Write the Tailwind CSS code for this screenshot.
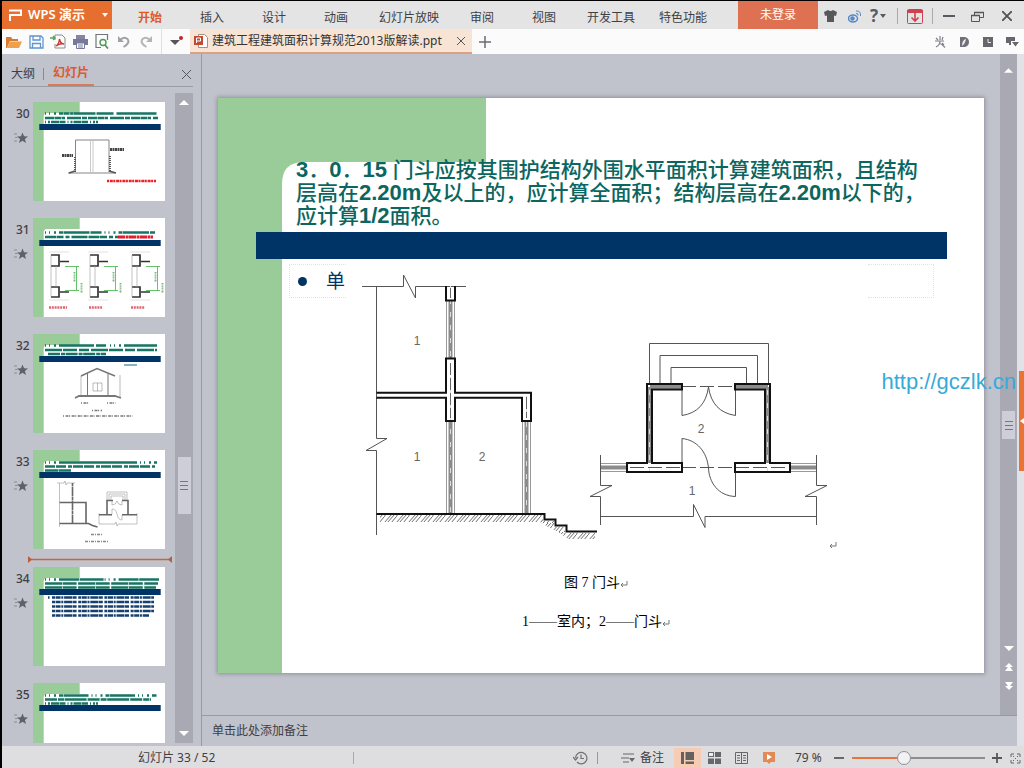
<!DOCTYPE html>
<html lang="zh-CN">
<head>
<meta charset="utf-8">
<title>WPS 演示</title>
<script src="https://cdn.jsdelivr.net/npm/@tailwindcss/browser@4"></script>
</head>
<body class="font-['Noto_Sans','Noto_Sans_CJK_SC',sans-serif] text-xs text-[#404044] bg-[#c0c2cc]">
<svg class="absolute w-0 h-0" aria-hidden="true">
  <defs>
    <symbol id="star" viewBox="0 0 14 12"><path d="M8.500 0.500l1.500 3.800 4 .2-3.100 2.500 1.100 4-3.500-2.300L5 11l1.100-4L3 4.500l4-.2z" fill="#5f6068"/><path d="M0 2h3M1 5.500h2.500M0 9h3" stroke="#8a8b93" fill="none"/></symbol>
    <symbol id="thumb" viewBox="0 0 132 99"><path fill="#fff" d="M0 0h132v99H0z"/><path fill="#9c9" d="M0 0h46.700v11H14q-3.300 0-3.300 3.500V99H0z"/><path fill="#036" d="M6.300 22h121.400v6H6.300z"/></symbol>
    <symbol id="ret" viewBox="0 0 8 8"><path d="M7 1v4H1M3 3L1 5l2 2" fill="none" stroke="#777"/></symbol>
    <pattern id="hatch" width="12" height="9" patternUnits="userSpaceOnUse" y="514"><path d="M0 9L8 0M3 9L11 0M7 9l5-6M0 3L2 0" stroke="#444" stroke-width=".8" fill="none"/></pattern>
  </defs>
</svg>
<div class="flex flex-col h-screen border-t border-l-2 border-black overflow-hidden">
  <header class="flex shrink-0 h-7 bg-[#e4e4e5] items-stretch">
    <button class="flex items-center w-[110px] pl-1.5 bg-[#e66f30] text-white text-xs font-semibold">
      <svg class="w-[14px] h-3 mr-1.5" viewBox="0 0 14 12" fill="none" stroke="#fff" stroke-width="2"><path d="M1 1.500h12v4.500H2V12"/></svg>
      <span class="flex-1 text-left text-[13px] whitespace-nowrap">WPS 演示</span>
      <svg class="w-[6px] h-[4px] mr-1" viewBox="0 0 6 4"><path d="M0 0h6L3 4z" fill="#fff"/></svg>
    </button>
    <nav class="flex ml-[7px] [&>button]:w-[62px] [&>button]:pt-1.5">
      <button class="text-[#dd5a22] font-bold">开始</button><button>插入</button><button>设计</button><button>动画</button>
      <button class="w-[84px]!">幻灯片放映</button><button>审阅</button><button>视图</button>
      <button class="w-[72px]!">开发工具</button><button class="w-[72px]!">特色功能</button>
    </nav>
    <div class="flex-1"></div>
    <button class="w-20 bg-[#de7152] text-white">未登录</button>
    <div class="flex items-center w-[206px] pt-0.5">
      <button aria-label="皮肤" class="w-6 grid place-items-center"><svg width="13" height="12" viewBox="0 0 13 12" fill="#57585c"><path d="M0 2l4-2q2.500 2 5 0l4 2-1 4-2-.5V12H3V5.500L1 6z"/></svg></button>
      <button aria-label="微博" class="w-6 grid place-items-center"><svg width="13" height="13" viewBox="0 0 13 13" fill="none" stroke="#5488c8"><ellipse cx="5" cy="8.500" rx="4.500" ry="3.500" stroke-width="1.500"/><circle cx="4.500" cy="8.500" r="1.800" fill="#5488c8"/><path d="M8 3.500q2.500-.5 2 2M8 1q5-.5 4.500 5"/></svg></button>
      <button aria-label="帮助" class="flex items-center w-[31px] pl-1 text-[17px] leading-5 font-bold text-[#5a5b60]">?<svg class="ml-0.5" width="6" height="4" viewBox="0 0 6 4"><path d="M0 0h6L3 4z" fill="#5a5b60"/></svg></button>
      <span class="w-px h-4 bg-[#aaa]"></span>
      <button aria-label="下载" class="w-[34px] grid place-items-center"><svg width="16" height="15" viewBox="0 0 16 15" fill="none" stroke="#cd4150"><rect x=".5" y=".5" width="15" height="14" rx="1"/><path d="M0 2.500h16" stroke-width="3"/><path d="M8 4v8M4.500 8.500L8 12l3.500-3.500" stroke-width="1.600"/></svg></button>
      <span class="w-px h-4 bg-[#aaa]"></span>
      <button aria-label="最小化" class="w-8 grid place-items-center"><span class="w-3 h-0.5 bg-[#5a5b60]"></span></button>
      <button aria-label="还原" class="w-6 grid place-items-center"><svg width="13" height="11" viewBox="0 0 13 11" fill="none" stroke="#55565a"><path d="M.5 4.500h8v6h-8zM3.500 4V1.500h9v5H9"/><path d="M3 1.500h10M0 4.500h9" stroke-width="1.500"/></svg></button>
      <button aria-label="关闭" class="flex-1 grid place-items-center"><svg width="10" height="10" viewBox="0 0 10 10" stroke="#505155" stroke-width="1.800"><path d="M0 0l10 10M10 0L0 10"/></svg></button>
    </div>
  </header>

  <div class="flex shrink-0 h-[25px] bg-[#fbfbfb] items-stretch">
    <div class="flex ml-px [&>button]:w-[22px] [&>button]:grid [&>button]:place-items-center">
      <button aria-label="打开"><svg width="16" height="12" viewBox="0 0 16 12"><path d="M0 12V1h5l1.500 2H12v2H4L1 12z" fill="#d77b31"/><path d="M4 5.500h12L13 12H1z" fill="#f0a04d"/></svg></button>
      <button aria-label="保存"><svg width="15" height="14" viewBox="0 0 15 14" fill="none" stroke="#5e94d0" stroke-width="1.300"><path d="M1 1h11l2 2v10H1zM4 1v4h7V1M3.500 13V8.500h8V13"/></svg></button>
      <button aria-label="输出为PDF"><svg width="16" height="15" viewBox="0 0 16 15" fill="none"><path d="M5 6V1h7l3 3v10H5V10" stroke="#8a8b90"/><path d="M6 12q3-2 3.500-7 1 5 4.500 5-4-1-8 2z" stroke="#c43c34" stroke-width="1.400"/><path d="M0 4h5M3 2l2 2-2 2" stroke="#59a05c" stroke-width="1.300"/></svg></button>
      <button aria-label="打印"><svg width="15" height="14" viewBox="0 0 15 14"><path d="M3 0h9v4H3z" fill="#84869f"/><path d="M0 4h15v6H0z" fill="#75789c"/><path d="M3.500 8h8v5.500h-8z" fill="#fff" stroke="#75789c"/><path d="M5 10h5M5 12h5" stroke="#75789c"/></svg></button>
      <button aria-label="打印预览"><svg width="14" height="15" viewBox="0 0 14 15" fill="none"><path d="M12.500 6V.5H1v13h5" stroke="#73757b" stroke-width="1.200"/><circle cx="8" cy="8.500" r="3" stroke="#4e9a58" stroke-width="1.400"/><path d="M10 11l3 3.500" stroke="#4e9a58" stroke-width="1.800"/></svg></button>
      <button aria-label="撤销"><svg width="12" height="13" viewBox="0 0 12 13" fill="none" stroke="#a0a1a6" stroke-width="2"><path d="M2 5q4-4 7.500-1 3 4-4 8"/><path d="M0 1v6h6z" fill="#a0a1a6" stroke="none"/></svg></button>
      <button aria-label="恢复"><svg width="12" height="13" viewBox="0 0 12 13" fill="none" stroke="#b3b4b8" stroke-width="2"><path d="M10 5q-4-4-7.500-1-3 4 4 8"/><path d="M12 1v6H6z" fill="#b3b4b8" stroke="none"/></svg></button>
    </div>
    <span class="w-px ml-[4px] bg-[#e0e0e0]"></span>
    <button aria-label="更多" class="w-7 grid place-items-center"><svg width="13" height="11" viewBox="0 0 13 11"><path d="M0 4h10L5 9z" fill="#55565c"/><circle cx="11" cy="2" r="2" fill="#c4242a"/></svg></button>
    <div class="flex items-center w-[282px] pl-1 bg-[#f7e4d5] border-b-2 border-[#dda084] text-xs">
      <svg width="14" height="14" viewBox="0 0 14 14" fill="none"><path d="M4.500.5h6l3 3v10h-9z" stroke="#9e9187" fill="#fff"/><path d="M0 2h9v9H0z" fill="#c24a32"/><path d="M2.500 9V4h4v3h-4" stroke="#fff"/></svg>
      <span class="ml-1 flex-1 whitespace-nowrap text-[#333]">建筑工程建筑面积计算规范2013版解读.ppt</span>
      <button aria-label="关闭文档" class="w-[22px] grid place-items-center"><svg width="8" height="8" viewBox="0 0 8 8" stroke="#555"><path d="M0 0l8 8M8 0L0 8"/></svg></button>
    </div>
    <button aria-label="新建" class="w-[26px] grid place-items-center"><svg width="12" height="12" viewBox="0 0 12 12" stroke="#6b6c70" stroke-width="1.500"><path d="M0 6h12M6 0v12"/></svg></button>
    <div class="flex-1"></div>
    <div class="flex [&>button]:w-6 [&>button]:grid [&>button]:place-items-center">
      <button aria-label="皮肤中心"><svg width="11" height="12" viewBox="0 0 11 12" fill="none" stroke="#808187" stroke-width="1.200"><path d="M5 0v4M1 2l2 2M8 1L7 4M0 5h9M5 5q0 4-4 6M4 7q3 1 6 4.500M7 7l2 2"/></svg></button>
      <button aria-label="稻壳"><svg width="9" height="10" viewBox="0 0 9 10"><path d="M0 0h5q4 1 4 5t-4 5H0z" fill="#707178"/><path d="M2 9q0-6 4-7-1 5-4 7" fill="#eee"/></svg></button>
      <button aria-label="历史"><svg width="10" height="10" viewBox="0 0 10 10"><path d="M0 0h10v10H0z" fill="#66676d"/><path d="M5 2v3.500h3" stroke="#eee" fill="none"/></svg></button>
      <button aria-label="选项"><svg width="13" height="10" viewBox="0 0 13 10" fill="#66676d"><path d="M0 0h9v4H5v4H3v-2H0zM6 5h7L9.500 9.500z"/></svg></button>
    </div>
  </div>

  <main class="flex flex-1 min-h-0">
    <aside class="flex flex-col w-[200px] shrink-0 border-r border-[#999ba4]">
      <div class="flex items-end ml-1.5 mr-2 h-[33px] border-b border-[#9a9ca4] shrink-0">
        <button class="h-6 w-[30px]">大纲</button>
        <span class="w-px h-3 ml-[5px] mr-1 mb-1.5 bg-[#888a93]"></span>
        <button class="h-6 w-[46px] font-bold text-[#dd5a2c] border-b-2 border-[#dc7a58]">幻灯片</button>
        <span class="flex-1"></span>
        <button aria-label="关闭窗格" class="h-6 w-[9px] mr-0.5 grid place-items-center"><svg width="9" height="9" viewBox="0 0 9 9" stroke="#55565e"><path d="M0 0l9 9M9 0L0 9"/></svg></button>
      </div>
      <div class="flex flex-1 min-h-0 mt-1.5 mb-[3px]">
        <ol class="flex-1 overflow-hidden pt-[9px] [&>li]:flex [&>li]:mb-[17px] [&_.art]:w-[132px] [&_.art]:h-[99px]">
          <li><div class="w-[31px] pl-[14px] pt-1 font-medium leading-4 shrink-0">30<svg class="-ml-0.5 mt-2.5 w-[14px] h-3"><use href="#star"/></svg></div>
            <svg class="art" viewBox="0 0 132 99" fill="none"><use href="#thumb"/>
              <g stroke="#177564" stroke-width="2.600"><path d="M12 11.500h112" stroke-dasharray="1 3 1 4 2 3 4 .5 6 .6 3 .4 22 1 17 3 40 1"/><path d="M12 16h113" stroke-dasharray="9 .5 7 .5 3 2 14 1 5 1"/><path d="M12 20h53" stroke-dasharray="1 2 2 1 8 .5 6 2"/></g>
              <g stroke="#666" stroke-width=".8"><path d="M42.500 38H76M42.500 38v32M76 38v32M35 71h47"/><path d="M57.500 38v32M60 38v32" stroke="#bbb"/></g><path d="M42 55v15M77 54v16" stroke="#555" stroke-width="2" stroke-dasharray="1 1"/><path d="M29 53.500h11M77 47.500h14" stroke="#444" stroke-width="3" stroke-dasharray="2 .5"/><path d="M36 71l6-2M76 69l7 2" stroke="#555" stroke-width="1.500"/>
              <path d="M74 79h49" stroke="#e22" stroke-width="2.600" stroke-dasharray="2 .8 3 .5"/></svg></li>
          <li><div class="w-[31px] pl-[14px] pt-1 font-medium leading-4 shrink-0">31<svg class="-ml-0.5 mt-2.5 w-[14px] h-3"><use href="#star"/></svg></div>
            <svg class="art" viewBox="0 0 132 99" fill="none"><use href="#thumb"/>
              <g stroke="#177564" stroke-width="2.600"><path d="M12 14.500h110" stroke-dasharray="1 3 1 4 2 3 4 .5 26 1 11 3"/><path d="M12 19h73" stroke-dasharray="11 .5 7 2 4 2 16 1"/></g><path d="M85 19h35" stroke="#e21f2c" stroke-width="3" stroke-dasharray="7 .6 3 .4"/>
              <g id="col"><path d="M18 37h8v11h-8M18 69h8v10h-8" stroke="#333" stroke-width="1.700"/><path d="M18 37v11M18 69v10M18 48v21M23 48v21" stroke="#999" stroke-width=".6"/><path d="M27 43.500h9M27 74h9" stroke="#333" stroke-width="1.500"/><path d="M32 48.500h14M43.500 48v25M32 72.500h14" stroke="#53bd58" stroke-width=".9"/><path d="M41.500 54v10M48.500 65v10" stroke="#72b777" stroke-width="1.800" stroke-dasharray="1 .6"/><path d="M16 34h20M16 82h20" stroke="#ccc" stroke-width=".6"/></g><use href="#col" x="39"/><use href="#col" x="81"/>
              <path d="M16 89.500h18M56 89.500h13M98 89.500h14" stroke="#dd6670" stroke-width="2.400" stroke-dasharray="2 .8"/></svg></li>
          <li><div class="w-[31px] pl-[14px] pt-1 font-medium leading-4 shrink-0">32<svg class="-ml-0.5 mt-2.5 w-[14px] h-3"><use href="#star"/></svg></div>
            <svg class="art" viewBox="0 0 132 99" fill="none"><use href="#thumb"/>
              <g stroke="#177564" stroke-width="2.600"><path d="M12 11.500h112" stroke-dasharray="1 3 1 4 2 3 35 2 10 4"/><path d="M12 16h112" stroke-dasharray="17 1 14 2 10 2"/><path d="M15 20h58" stroke-dasharray="12 1 4 .6"/></g><path d="M91 31h13" stroke="#2f83a0" stroke-width="1.200"/>
              <g stroke="#777"><path d="M48 42l16-7.500L82 42" stroke-width="1.500"/><path d="M54.500 39v23M75 39v23"/><path d="M42 64l4-2h36l6 2" stroke-width="1.800"/><path d="M60 49h9v8h-9zM64.500 49v8M48 42v20M87 41v22" stroke-width=".5"/></g>
              <path d="M48 69h8M74 69h9M59 76.500h10M30 82h70" stroke="#777" stroke-width="1.300" stroke-dasharray="1 1.500 3 .6"/></svg></li>
          <li><div class="w-[31px] pl-[14px] pt-1 font-medium leading-4 shrink-0">33<svg class="-ml-0.5 mt-2.5 w-[14px] h-3"><use href="#star"/></svg></div>
            <svg class="art" viewBox="0 0 132 99" fill="none"><use href="#thumb"/>
              <g stroke="#177564" stroke-width="2.600"><path d="M12 12.500h112" stroke-dasharray="1 3 1 4 2 3 78 3"/><path d="M12 16.500h110" stroke-dasharray="10 1 10 2 4 1"/><path d="M12 20.500h26" stroke-dasharray="13 .5"/></g>
              <g stroke="#999" stroke-width=".6"><path d="M24 33h7l1-2 1 4 1-2h8M26.500 33v44M74 50v-8h20v8M76 50v-6h16v6M78 50v-4h12v4M66 63v11h16l1-2 1 4 1-2h19V63M79 51v4q4 0 5-4 1 4 5 4v-4M79 64v-5q4 0 5 5 1 6 5 6v-5"/></g>
              <g stroke="#666" stroke-width="1.600"><path d="M39.500 33v40" stroke-dasharray="3 .5 10 .5"/><path d="M26.500 52.500h26.500v21M26.500 73.500h29l4 2 5 1.500M80 50.500h-6v14M89 50.500h6v14M66 64.700h13M89 64.700h15"/></g>
              <path d="M58 84.500h11M52 91.500h24" stroke="#888" stroke-width="1.500" stroke-dasharray="3 1 1 1"/></svg></li>
          <li class="mb-1! -mt-2.5 ml-[26px] items-center" aria-hidden="true"><svg class="w-[144px] h-[7px]" viewBox="0 0 144 7"><path d="M2 3.500h140" stroke="#c9673c" stroke-width="1.500"/><path d="M0 0l4 3.500L0 7zM144 0l-4 3.500 4 3.500z" fill="#b55f40"/></svg></li>
          <li><div class="w-[31px] pl-[14px] pt-1 font-medium leading-4 shrink-0">34<svg class="-ml-0.5 mt-2.5 w-[14px] h-3"><use href="#star"/></svg></div>
            <svg class="art" viewBox="0 0 132 99" fill="none"><use href="#thumb"/>
              <g stroke="#177564" stroke-width="2.600"><path d="M12 12.500h114" stroke-dasharray="1 3 1 4 2 3 20 .6 24 1"/><path d="M12 16.500h113M12 20.500h111" stroke-dasharray="17 .6 14 1.500"/></g>
              <g stroke="#173f70" stroke-width="2.400"><path d="M15 30.500h1.500M19 30.500h102M19 35h102M19 39.500h102M19 44h102M19 48.500h97" stroke-dasharray="3 .6 5 .7 2 .8 8 .5 4 1.600"/></g></svg></li>
          <li><div class="w-[31px] pl-[14px] pt-1 font-medium leading-4 shrink-0">35<svg class="-ml-0.5 mt-2.5 w-[14px] h-3"><use href="#star"/></svg></div>
            <svg class="art" viewBox="0 0 132 99" fill="none"><use href="#thumb"/>
              <g stroke="#177564" stroke-width="2.600"><path d="M12 12.500h112" stroke-dasharray="1 3 1 4 2 3 4 .5 25 3"/><path d="M12 16.500h106" stroke-dasharray="12 1 6 .6 22 1"/><path d="M12 20.500h53" stroke-dasharray="1 2 2 1 8 .5 6 2"/></g></svg></li>
        </ol>
        <div class="flex flex-col items-center w-[18px] mr-2 bg-[#a8a9b2] py-[7px]">
          <svg width="10" height="5" viewBox="0 0 10 5"><path d="M0 5h10L5 0z" fill="#fff"/></svg>
          <div class="flex-[352]"></div>
          <div class="flex flex-col justify-center items-center gap-[3px] w-[13px] h-[57px] bg-[#ceced8]"><i class="w-2 h-px bg-[#777]"></i><i class="w-2 h-px bg-[#777]"></i><i class="w-2 h-px bg-[#777]"></i></div>
          <div class="flex-[217]"></div>
          <svg width="10" height="5" viewBox="0 0 10 5"><path d="M0 0h10L5 5z" fill="#fff"/></svg>
        </div>
      </div>
    </aside>

    <section class="flex flex-col flex-1 min-w-0 bg-[#c0c2cc]">
      <div class="flex flex-1 min-h-0">
        <div class="flex-1 min-w-0 px-4 pt-11 overflow-hidden">
          <article class="relative w-full aspect-[766/575] bg-white shadow-[0_0_4px_1px_#8f9099] overflow-hidden">
            <svg class="absolute inset-0 w-full h-full" viewBox="0 0 766 575"><path d="M0 0h268v64H86q-22 0-22 22v489H0z" fill="#9c9"/></svg>
            <div class="relative pt-[60px]">
              <h1 class="ml-[78px] text-[21px] leading-[23px] text-[#0b6660] whitespace-nowrap font-medium font-['Liberation_Sans','Noto_Sans_CJK_SC',sans-serif] [&>b]:text-[22px]"><b>3</b>．<b>0</b>．<b>15</b> 门斗应按其围护结构外围水平面积计算建筑面积，且结构<br>层高在<b>2.20m</b>及以上的，应计算全面积；结构层高在<b>2.20m</b>以下的，<br>应计算<b>1/2</b>面积。</h1>
              <div class="h-[27px] mt-[5px] ml-[38px] mr-[37px] bg-[#036]"></div>
              <div class="flex items-start ml-[71px] mr-[50px] mt-[5px]">
                <p class="flex items-center h-[34px] w-[57px] pl-2 shrink-0 border border-r-0 border-dotted border-[#e2e2e6] text-[19px] leading-5 text-[#036]"><span class="w-[9px] h-[9px] rounded-full bg-[#036] mr-[19px] shrink-0"></span>单</p>
                <figure class="w-[522px] shrink-0 font-['Liberation_Serif','Noto_Sans_CJK_SC',serif] text-sm text-black">
                  <svg class="w-full h-[299px] block" viewBox="346 264 522 299" fill="none">
                    <g stroke="#555" stroke-width="1">
                      <path d="M362 286.500H403.500V275L415.500 298V286.500H466M376.500 286.500V438.500H387L366 450.500H376.500V535"/>
                      <path d="M649.500 384V343.500H768.500V384M660 384V355.500H757.500V384M671 384V367.500H746.500V384"/>
                      <path d="M682 389V415.500Q705 412 708.500 387Q712 412 735.500 415.500V389M682 463V438.500C697 440 707 452 708.500 468C709 482 718 496 735.500 496.500V472"/>
                      <path d="M600.500 455V485.500H612L590 496.500H600.500V525M816.500 455V485.500H827L805 496.500H816.500V525M600.500 516.500H693.500V504.500L705 527.500V516.500H816.500"/>
                      <path d="M682 386.500H735M682 467.500H735M630 467.500H682M735 467.500H787" stroke-dasharray="14 4"/>
                    </g>
                    <g stroke="#999"><path d="M446.500 301V358M454.500 301V358M446.500 421V513M454.500 421V513M522.500 421V513M530.500 421V513M601 463.500H627M601 471.500H627M790 463.500H816M790 471.500H816"/></g>
                    <g stroke="#8b8b8b" stroke-width="4"><path d="M450.500 301V358M450.500 421V513M526.500 421V513M601 467.500H627M790 467.500H816M649.500 387V463M767.500 387V463M650 386.800H681M736 386.800H768"/></g>
                    <path d="M450.500 286V513M526.500 396V513M649.500 390V472M767.500 390V472" stroke="#ddd" stroke-dasharray="5 8"/>
                    <path d="M450.500 288V298M450.500 363V418M526.500 397V418" stroke="#666" stroke-dasharray="12 3"/>
                    <g stroke="#111" stroke-width="2">
                      <path d="M446 286V300.500H455V286M376.500 392.700H446V358.500H455V392.700H531V421H522V397.700H455V421H446V397.700H376.500"/>
                      <path d="M682 384H647V463H627V472H682V463H652V389.500H682ZM735 384H770V463H790V472H735V463H765V389.500H735Z"/>
                      <path d="M376.500 514H544.500V519.500H555.500V525.500H566.500V531.500H597"/>
                    </g>
                    <path d="M380 515H543V521H554V527H565V533H595V539H568L560 533L548 527L540 522H380Z" fill="url(#hatch)"/>
                    <g fill="#666" font-family="Liberation Sans, sans-serif" font-size="12" text-anchor="middle"><text x="417" y="345">1</text><text x="417" y="461">1</text><text x="482" y="461">2</text><text x="701" y="433">2</text><text x="692" y="495">1</text></g>
                    <use href="#ret" x="829" y="541" width="8" height="8"/>
                  </svg>
                  <figcaption class="text-center leading-[39px] pr-[22px]"><p>图 7 门斗<svg class="inline w-2 h-2"><use href="#ret"/></svg></p><p>1——室内；2——门斗<svg class="inline w-2 h-2"><use href="#ret"/></svg></p></figcaption>
                </figure>
                <div class="flex-1 h-[34px] border border-l-0 border-dotted border-[#e2e2e6]"></div>
              </div>
            </div>
          </article>
        </div>
        <div class="flex flex-col items-center w-[17px] shrink-0 bg-[#a8a9b2] pt-[14px] pb-6">
          <svg width="9" height="5" viewBox="0 0 10 5"><path d="M0 5h10L5 0z" fill="#fff"/></svg>
          <div class="flex-[340]"></div>
          <div class="flex flex-col justify-center items-center gap-[3px] w-[13px] h-7 shrink-0 bg-[#ceced8]"><i class="w-2 h-px bg-[#777]"></i><i class="w-2 h-px bg-[#777]"></i><i class="w-2 h-px bg-[#777]"></i></div>
          <div class="flex-[208]"></div>
          <svg class="shrink-0" width="10" height="45" viewBox="0 0 10 45" fill="#fff"><path d="M0 0h10L5 5zM5 17l4 4H6l3 4H1l3-4H1zM5 44l-4-4h3l-3-4h8l-3 4h3z"/></svg>
        </div>
      </div>
      <div class="h-[31px] shrink-0 flex items-center pl-2.5 border-t border-[#999ba4]">单击此处添加备注</div>
    </section>

    <div class="relative flex flex-col w-[7px] shrink-0 bg-[#e1e1e8] items-end">
      <button aria-label="展开任务窗格" class="mt-[317px] w-[5px] h-[100px] bg-[#e87332] grid place-items-center"><svg width="4" height="6" viewBox="0 0 4 6"><path d="M4 0v6L0 3z" fill="#fff"/></svg></button>
      <a href="http://gczlk.cn" class="absolute top-[314px] right-2 text-[22px] leading-7 text-[#35abda] font-['Liberation_Sans',sans-serif] whitespace-nowrap">http://gczlk.cn</a>
    </div>
  </main>

  <footer class="flex items-center shrink-0 h-[22px] pt-0.5 bg-[#dedee0]">
    <span class="ml-[136px]">幻灯片 33 / 52</span>
    <span class="w-px h-3 ml-[138px] bg-[#aaa]"></span>
    <span class="flex-1"></span>
    <button aria-label="历史记录" class="w-[32px] grid place-items-center"><svg width="15" height="14" viewBox="0 0 15 14" fill="none" stroke="#707176" stroke-width="1.200"><path d="M2.500 7A5.700 5.700 0 1 1 4 11M0 6l2.500 3L5 6M8 3.500V7.500h3"/></svg></button>
    <span class="w-px h-3 bg-[#999]"></span>
    <button class="flex items-center ml-[23px] whitespace-nowrap"><svg class="mr-[5px]" width="14" height="10" viewBox="0 0 14 10"><path d="M2 1h11M0 5h8M2 9h6" stroke="#66676c"/><path d="M8 5h6l-3 4z" fill="#66676c"/></svg>备注</button>
    <div class="flex ml-2.5 [&>button]:w-[27px] [&>button]:h-5 [&>button]:grid [&>button]:place-items-center">
      <button aria-label="普通视图" class="bg-[#f6cdb4]"><svg width="13" height="12" viewBox="0 0 13 12" fill="#66625f"><path d="M0 0h3v12H0zM4.500 0H13v8H4.500zM4.500 9.500H13V12H4.500z"/></svg></button>
      <button aria-label="幻灯片浏览"><svg width="13" height="12" viewBox="0 0 13 12" fill="#66676c"><path d="M0 0h6v5H0zM7 0h6v5H7zM0 6.500h6V12H0zM7 6.500h6V12H7z"/><path d="M1 1h4v3H1z" fill="#eee"/></svg></button>
      <button aria-label="阅读视图"><svg width="13" height="12" viewBox="0 0 13 12" fill="none" stroke="#66676c"><path d="M.5.500h12v11H.5zM6.500 0v12M2 3.500h3M2 6h3M2 8.500h3M8 3.500h3M8 6h3M8 8.500h3"/></svg></button>
      <button aria-label="放映"><svg width="12" height="12" viewBox="0 0 12 12"><path d="M0 0h12v10H8l-2 2-2-2H0z" fill="#e28a55"/><path d="M4 2l5 3-5 3z" fill="#fff"/></svg></button>
    </div>
    <span class="ml-[13px] w-[37px] whitespace-nowrap">79 %</span>
    <button aria-label="缩小" class="w-[14px] grid place-items-center"><span class="w-2.5 h-0.5 bg-[#66676c]"></span></button>
    <input type="range" aria-label="缩放" min="0" max="100" value="38" class="appearance-none w-[133px] h-[14px] mx-[6px] bg-[linear-gradient(to_right,#e3763e_40%,#8b8c92_40%)] bg-[length:100%_2px] bg-center bg-no-repeat [&::-webkit-slider-thumb]:appearance-none [&::-webkit-slider-thumb]:w-[14px] [&::-webkit-slider-thumb]:h-[14px] [&::-webkit-slider-thumb]:rounded-full [&::-webkit-slider-thumb]:bg-[#f2f2f4] [&::-webkit-slider-thumb]:border [&::-webkit-slider-thumb]:border-[#909198]">
    <button aria-label="放大" class="w-[12px] grid place-items-center"><svg width="10" height="10" viewBox="0 0 10 10" stroke="#55565b" stroke-width="1.800"><path d="M0 5h10M5 0v10"/></svg></button>
    <button aria-label="适应窗口" class="w-[21px] pl-1 grid place-items-center"><svg width="11" height="11" viewBox="0 0 11 11" fill="none" stroke="#66676c"><path d="M1 4V1h3M7 1h3v3M10 7v3H7M4 10H1V7M3 3l1 1M8 3L7 4M3 8l1-1M8 8L7 7M5 5.500h1"/></svg></button>
  </footer>
</div>
</body>
</html>
